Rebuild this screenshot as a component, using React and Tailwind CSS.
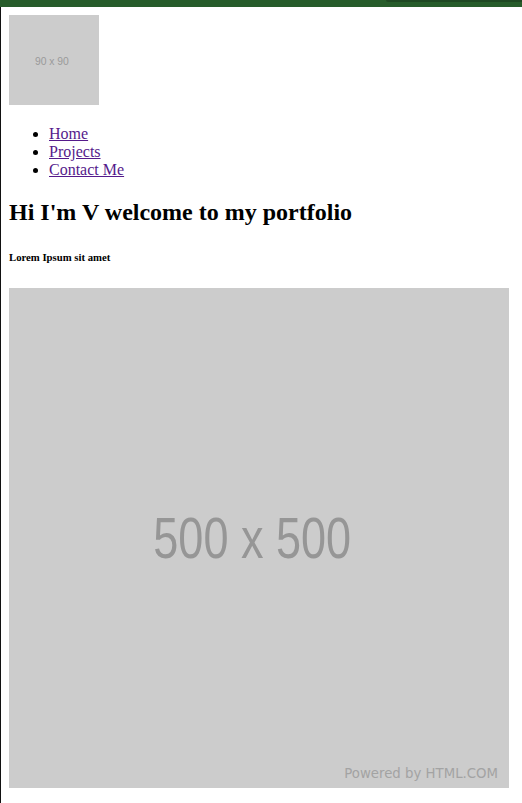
export default function App() {
  return (
    <div className="min-h-screen bg-white" style={{ fontFamily: "'Liberation Serif', serif" }}>
      {/* Top bar */}
      <div className="h-[7px] bg-[#275c2a] flex justify-end">
        <div className="w-[136px] h-[2px] bg-[#1f4822] rounded-bl-sm" />
      </div>

      <div className="border-l border-[#111] pl-2 pt-2 pb-[15px] text-black">
        {/* Logo placeholder */}
        <div className="w-[90px] h-[90px] bg-[#cccccc] flex items-center justify-center">
          <span
            className="text-[11.5px] text-[#9a9a9a] mt-[3px] mr-[4px] scale-x-[0.9]"
            style={{ fontFamily: "'Liberation Sans', sans-serif" }}
          >
            90 x 90
          </span>
        </div>

        <ul className="list-disc pl-10 mt-[20px] text-base leading-[18px]">
          <li><a href="#" className="text-[#551a8b] underline">Home</a></li>
          <li><a href="#" className="text-[#551a8b] underline">Projects</a></li>
          <li><a href="#" className="text-[#551a8b] underline">Contact Me</a></li>
        </ul>

        <h2 className="text-2xl font-bold leading-[26.6px] mt-5">Hi I'm V welcome to my portfolio</h2>

        <h6 className="text-[10.72px] font-bold leading-[12px] mt-[25px]">Lorem Ipsum sit amet</h6>

        {/* Hero placeholder */}
        <div className="relative w-[500px] h-[500px] bg-[#cccccc] mt-[25px] flex items-center justify-center">
          <span
            className="text-[57px] leading-none text-[#969696] scale-x-[0.79] mr-[13px] mt-[2px]"
            style={{ fontFamily: "'Liberation Sans', sans-serif" }}
          >
            500 x 500
          </span>
          <span
            className="absolute right-[11px] bottom-[7px] text-[13.3px] leading-none text-[#a3a3a3]"
            style={{ fontFamily: "'DejaVu Sans', sans-serif" }}
          >
            Powered by HTML.COM
          </span>
        </div>
      </div>
    </div>
  );
}
